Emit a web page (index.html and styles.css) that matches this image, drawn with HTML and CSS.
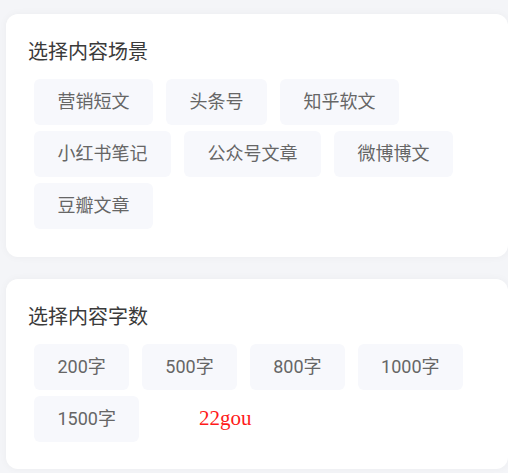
FILE: index.html
```html
<!doctype html>
<html lang="zh-CN">
    <head>
        <meta charset="utf-8">
        <title>选择内容</title>
        <link rel="stylesheet" href="styles.css">
    </head>

    <body>
        <div class = "card">
            <div class = "title">选择内容场景</div>
            <div class = "tags">
                <span class = "tag">营销短文</span>
                <span class = "tag">头条号</span>
                <span class = "tag">知乎软文</span>
                <span class = "tag">小红书笔记</span>
                <span class = "tag">公众号文章</span>
                <span class = "tag">微博博文</span>
                <span class = "tag">豆瓣文章</span>
            </div>
        </div>

        <div class = "card">
            <div class = "title">选择内容字数</div>
            <div class = "tags count">
                <span class = "tag">200字</span>
                <span class = "tag">500字</span>
                <span class = "tag">800字</span>
                <span class = "tag">1000字</span>
                <span class = "tag">1500字</span>
            </div>
            <span class = "mark">22gou</span>
        </div>
    </body>
</html>
```

FILE: styles.css
```css
html{
    font-family: Roboto, "Noto Sans CJK SC", sans-serif;
}
body{
    margin: 0;
    padding: 14px 0 0 6px;
    background: #f4f5f8;
    overflow: hidden;
}
.card{
    position: relative;
    padding: 28px 22px 28px 22px;
    margin-bottom: 22px;
    background: white;
    border-radius: 12px;
    box-shadow: 0 0 8px rgba(0, 0, 0, 0.04);
}
.card + .card{
    padding-bottom: 27px;
}
.title{
    font-size: 20px;
    line-height: 20px;
    color: #3a3a3a;
    margin-bottom: 17px;
}
.tags{
    display: flex;
    flex-wrap: wrap;
    gap: 6px 13px;
    padding-left: 6px;
}
.tag{
    padding: 0 23.5px;
    height: 46px;
    line-height: 46px;
    font-size: 18px;
    color: #666;
    background: #f7f8fc;
    border-radius: 6px;
}
.count{
    column-gap: 12.5px;
}
.mark{
    position: absolute;
    left: 193px;
    top: 127px;
    font-family: "Liberation Serif", serif;
    font-size: 21px;
    color: #ff1a1a;
}
```
